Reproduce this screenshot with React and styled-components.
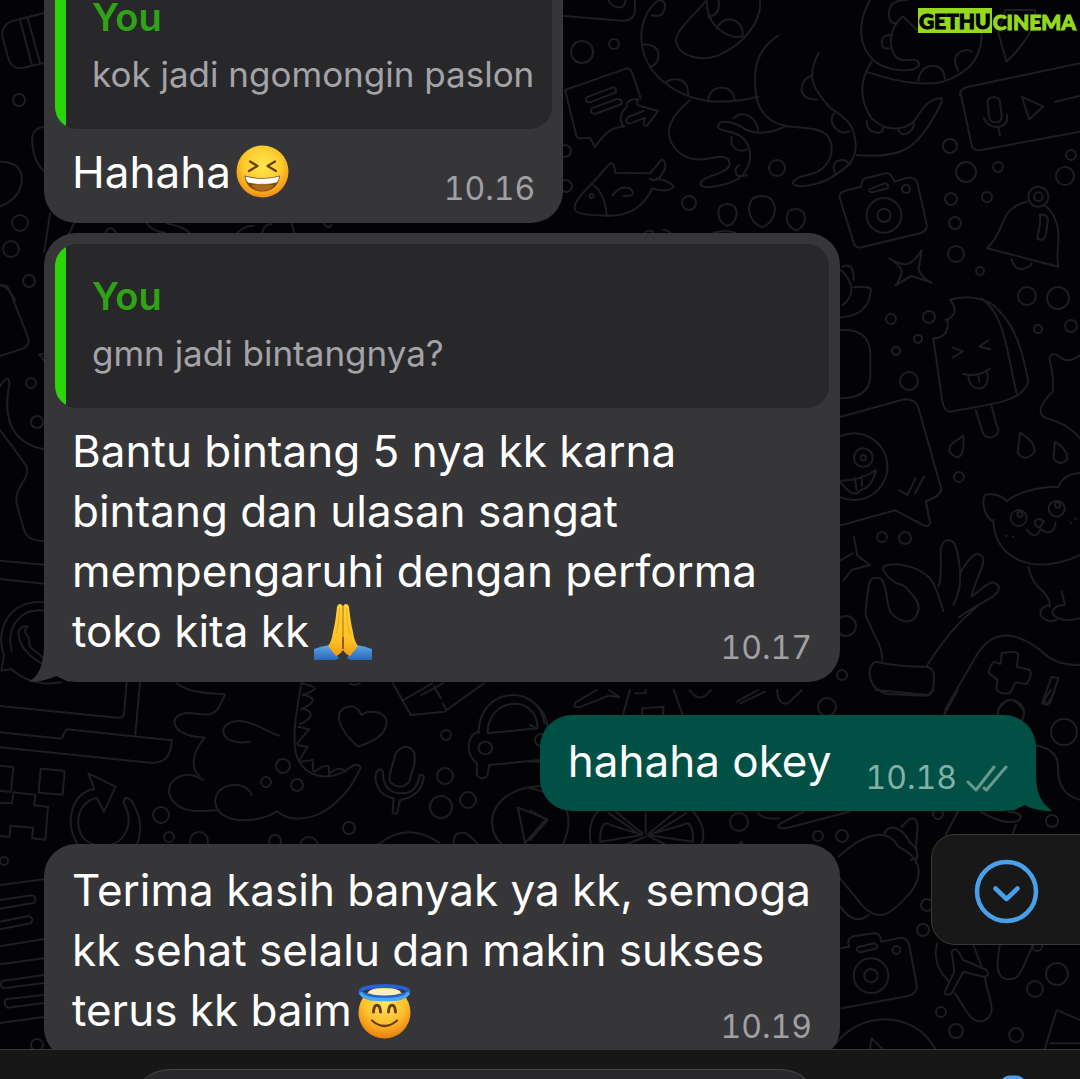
import { useState } from "react";
import styled, { createGlobalStyle } from "styled-components";

const GlobalStyle = createGlobalStyle`
  * {
    box-sizing: border-box;
  }
  body {
    margin: 0;
    background-color: #030305;
    font-family: Inter, "Liberation Sans", sans-serif;
    color: #fff;
  }
`;

const Screen = styled.div`
  position: relative;
  display: flex;
  flex-direction: column;
  height: 100vh;
  overflow: hidden;
`;

const WallpaperArt = styled.svg`
  position: absolute;
  top: 0;
  left: 0;
  width: 100%;
  height: 100%;
  fill: none;
  stroke: #1e1e20;
  stroke-linecap: round;
  stroke-linejoin: round;
`;

const Watermark = styled.div`
  position: absolute;
  top: 8px;
  right: 4px;
  display: flex;
  font-family: Lato, sans-serif;
  font-size: 21px;
  font-weight: 900;
  line-height: 26px;
  -webkit-text-stroke: 1px currentColor;
  color: #95d91e;
  z-index: 2;
`;

const WatermarkTag = styled.span`
  height: 25px;
  padding: 0 1px;
  margin-right: 1px;
  background-color: #95d91e;
  color: #000;
`;

const WatermarkTail = styled.span`
  padding-top: 1px;
`;

const Thread = styled.main`
  position: relative;
  flex: 1;
  min-height: 0;
  display: flex;
  flex-direction: column;
  align-items: flex-start;
  padding: 0 44px;
  margin-top: -46px;
`;

const Bubble = styled.article`
  position: relative;
  flex: none;
  max-width: 796px;
  margin-top: ${({ $gap }) => $gap || 0}px;
  align-self: ${({ $mine }) => ($mine ? "flex-end" : "flex-start")};
  background-color: ${({ $mine }) => ($mine ? "#005045" : "#363638")};
  border-radius: 32px;
`;

const Quote = styled.blockquote`
  display: flex;
  margin: 11px 11px 0;
  height: 164px;
  background-color: #28282a;
  border-radius: 22px;
  overflow: hidden;
  &::before {
    content: "";
    flex: none;
    width: 11px;
    background-color: #2cd40a;
  }
`;

const QuoteBody = styled.div`
  padding: 24px 18px 0 26px;
`;

const QuoteAuthor = styled.cite`
  display: block;
  font-size: 38px;
  font-style: normal;
  font-weight: 600;
  line-height: 57px;
  color: #2fa315;
`;

const QuoteText = styled.p`
  margin: 0;
  font-size: 35px;
  line-height: 57px;
  color: #a3a3a8;
`;

const Message = styled.p`
  margin: 0;
  padding: ${({ $quoted }) => ($quoted ? "13px 28px 21px" : "16px 28px 20px")};
  font-size: 44px;
  line-height: 60px;
  &::after {
    content: "";
    display: block;
    clear: both;
  }
`;

const Meta = styled.span`
  float: right;
  display: flex;
  align-items: center;
  gap: 9px;
  height: 40px;
  margin: 27px 0 -7px 34px;
  font-size: 32px;
  font-variant-numeric: tabular-nums;
  color: ${({ $mine }) => ($mine ? "#84b0a9" : "#a0a0a5")};
`;

const Emoji = styled.svg`
  width: ${({ $size }) => $size}px;
  height: ${({ $size }) => $size}px;
  margin: -4px 0 -4px 5px;
  vertical-align: ${({ $drop }) => -$drop}px;
`;

const Tail = styled.svg`
  position: absolute;
  bottom: 0;
  ${({ $mine }) => ($mine ? "right: -16px;" : "left: -15px;")}
  width: 40px;
  height: 40px;
  fill: ${({ $mine }) => ($mine ? "#005045" : "#363638")};
`;

const ScrollButton = styled.button`
  position: absolute;
  right: -1px;
  bottom: 134px;
  display: flex;
  align-items: center;
  width: 150px;
  height: 111px;
  padding: 3px 0 0 42px;
  background-color: #181819;
  border: 1px solid #39393b;
  border-radius: 24px 0 0 24px;
  cursor: pointer;
  z-index: 2;
`;

const Composer = styled.form`
  position: relative;
  flex: none;
  display: flex;
  align-items: flex-start;
  justify-content: space-between;
  height: 30px;
  padding: 19px 39px 0 130px;
  background-color: #171718;
  border-top: 1px solid #39393b;
  overflow: hidden;
  z-index: 1;
`;

const ComposerInput = styled.input`
  width: 690px;
  height: 80px;
  padding: 0 32px;
  background-color: #28282a;
  border: 1px solid #48484a;
  border-radius: 40px;
  font-size: 44px;
  color: #fff;
  outline: none;
`;

const CameraButton = styled.button`
  width: 56px;
  height: 62px;
  padding: 0;
  background: none;
  border: 0;
  cursor: pointer;
`;

const Laughing = () => (
  <Emoji $size={53} $drop={6} viewBox="0 0 53 53" role="img" aria-label="laughing">
    <defs>
      <radialGradient id="laugh-face" cx="50%" cy="38%" r="62%">
        <stop offset="0" stopColor="#ffe850" />
        <stop offset="0.6" stopColor="#fdc92b" />
        <stop offset="1" stopColor="#ee8f12" />
      </radialGradient>
    </defs>
    <circle cx="26.5" cy="26.5" r="26" fill="url(#laugh-face)" />
    <g fill="none" stroke="#6b3d0c" strokeWidth="2.2" strokeLinecap="round" strokeLinejoin="round">
      <path d="M14 16.500l7.500 4.500-8.500 5" />
      <path d="M39 16.500l-7.500 4.500 8.500 5" />
    </g>
    <path d="M8.500 30.500q18 5 35.500 0c-.5 9-7.500 16-17.700 16S9 39.500 8.500 30.500z" fill="#7c4a10" />
    <path d="M9.500 31.500q17 4.500 33.500 0c0 3-1 4.500-2.500 6q-14 3-28.500 0c-1.500-1.500-2.300-3-2.500-6z" fill="#fff" />
    <path d="M15 40.500q11.500-3.500 23 0c-6 7-17 7-23 0z" fill="#a96a1c" />
  </Emoji>
);

const FoldedHands = () => (
  <Emoji $size={58} $drop={10} viewBox="0 0 58 58" role="img" aria-label="folded hands">
    <defs>
      <linearGradient id="hand" x1="0" x2="0" y1="0" y2="1">
        <stop offset="0" stopColor="#ffd43a" />
        <stop offset="0.7" stopColor="#fdc024" />
        <stop offset="1" stopColor="#ee9c14" />
      </linearGradient>
      <linearGradient id="sleeve" x1="0" x2="0" y1="0" y2="1">
        <stop offset="0" stopColor="#5ea7ea" />
        <stop offset="1" stopColor="#2c68b4" />
      </linearGradient>
    </defs>
    <path d="M0 46q8-3 16-4l9 13q-2 2-5 2H0z" fill="url(#sleeve)" />
    <path d="M58 46q-8-3-16-4l-9 13q2 2 5 2h20z" fill="url(#sleeve)" />
    <path d="M29 4c-1-4-5-4-6 0-1 9-2 17-4 25-1 6-2 10-5 14l8 10c3-1 5-3 7-6z" fill="url(#hand)" />
    <path d="M29 4c1-4 5-4 6 0 1 9 2 17 4 25 1 6 2 10 5 14l-8 10c-3-1-5-3-7-6z" fill="url(#hand)" />
    <path d="M25.500 5q-.5 16-3.500 26M32.500 5q.5 16 3.500 26" fill="none" stroke="#f0a91c" strokeWidth="1" />
    <path d="M29 4v40" stroke="#c47a0c" strokeWidth="1.200" />
    <path d="M29 34v12" stroke="#7c4a10" strokeWidth="1.600" />
  </Emoji>
);

const Halo = () => (
  <Emoji $size={55} $drop={9} viewBox="0 0 55 55" role="img" aria-label="smiling with halo">
    <defs>
      <radialGradient id="halo-face" cx="50%" cy="30%" r="68%">
        <stop offset="0" stopColor="#ffe66a" />
        <stop offset="0.6" stopColor="#fdbf2c" />
        <stop offset="1" stopColor="#ea830e" />
      </radialGradient>
    </defs>
    <circle cx="27.500" cy="28.500" r="26" fill="url(#halo-face)" />
    <ellipse cx="27.500" cy="7.500" rx="24" ry="5.500" fill="none" stroke="#2563cf" strokeWidth="4" />
    <path d="M3.500 8.500c2 6.500 14 7 24 7s22-.5 24-7" fill="none" stroke="#4ea6ee" strokeWidth="3.500" />
    <ellipse cx="27.500" cy="8" rx="16" ry="3.500" fill="#fdf0b8" />
    <g fill="none" stroke="#6b3d0c" strokeLinecap="round">
      <path d="M16.500 28c.5-9 6.500-9 7 0M31.500 28c.5-9 6.500-9 7 0" strokeWidth="3" />
      <path d="M15 36.500q12.500 11 25 0" strokeWidth="2.200" />
    </g>
  </Emoji>
);

const Ticks = () => (
  <svg width="42" height="28" viewBox="0 0 42 28" fill="none" stroke="#68978f" strokeWidth="3" strokeLinecap="round" strokeLinejoin="round" aria-label="delivered">
    <path d="M2 18l8 8L28 3M18 24l2.500 2L40 3" />
  </svg>
);

const circles = [
  [19, 100, 6], [20, 223, 8], [11, 249, 8], [29, 281, 6], [31, 383, 5], [37, 422, 6], [582, 52, 11], [614, 44, 5],
  [777, 168, 8], [689, 203, 7], [950, 146, 7], [966, 172, 10], [998, 167, 5], [1071, 155, 5], [1065, 176, 9],
  [951, 199, 6], [987, 197, 5], [955, 223, 6], [956, 254, 8], [980, 271, 4], [565, 151, 6], [566, 186, 6],
  [891, 319, 5], [929, 317, 6], [918, 339, 4], [896, 351, 4], [909, 381, 9], [1027, 296, 9], [1058, 298, 11],
  [1038, 329, 4], [1071, 326, 6], [959, 477, 5], [882, 537, 5], [905, 538, 6], [846, 626, 10], [842, 675, 5],
  [283, 766, 7], [266, 782, 5], [297, 785, 6], [161, 815, 8], [169, 837, 5], [199, 841, 9],
  [349, 828, 6], [275, 841, 6], [309, 846, 9], [446, 735, 5], [445, 776, 8], [441, 807, 11], [468, 800, 8],
  [739, 822, 9], [818, 836, 5], [842, 836, 6], [827, 707, 9], [1011, 713, 13], [1064, 732, 13], [1052, 821, 6],
  [938, 814, 5], [927, 905, 6], [923, 930, 6], [941, 1012, 5], [956, 1031, 7], [1016, 1035, 7], [1035, 989, 8],
  [1057, 974, 11], [1037, 946, 5], [4, 861, 4], [37, 1045, 6], [541, 740, 6],
];

const Wallpaper = () => (
  <WallpaperArt viewBox="0 0 1080 1079" preserveAspectRatio="xMidYMid slice" aria-hidden="true">
    <g strokeWidth="2">
      {circles.map(([x, y, r], i) => (
        <circle key={i} cx={x} cy={y} r={r} />
      ))}
    </g>
    {/* jar, pebble, top left */}
    <g transform="scale(.33333)" strokeWidth="6">
      <path d="M135 38L40 62Q0 75 8 115L25 175Q35 210 70 203L135 188M60 60L95 192M82 52L120 188" />
      <path d="M135 380q-45 5-38 50 5 60 38 85M0 485q70 0 65 60-5 50-65 75M150 640L133 755M225 665l-30 60M0 855q25 5 45 45" />
      <path d="M315 700q15-30 35 0M440 670q20 25 55 28M500 670q50 10 70 30M710 700q25-25 50-22M785 700q10-30 30-28M875 672l8 28M970 670q15 20 25 5" />
    </g>
    {/* octopus, fish, note, camera, bell */}
    <g transform="translate(560 0) scale(.33333)" strokeWidth="6">
      <path d="M10 48l180 14q35 0 35-35V0M145 0q10 20 30 22t22-22" />
      <path d="M295 0C220 60 230 180 310 245s170 72 285 45M440 0c-30 40-90 85-92 120 5 50 80 70 140 40S605 70 600 0" />
      <path d="M275 45q30 10 38-15T300 0M248 133q45 0 47 30t-25 38M315 248q20-15 45-8t25 48M443 305q5-40 40-42t42 38M440 0q0 60 40 90t68 18M470 85q20-35 50-25t28 48M445 52q40-10 30-52" />
      <path d="M655 107c-80 50-75 130-65 190 15 55 55 75 90 82 60 5 95 5 120 25 30 40 10 90-25 110-35 15-70 15-77 35 10 18 65 8 105-10 60-35 90-60 83-115-5-60-40-75-75-100-50-55-75-90-35-165" />
      <path d="M755 227q-30 10-30 40t45 32M822 340q-15 20 2 42t45 12M825 520q-12-30 10-38t34 12" />
      <path d="M390 300c-60 50-75 90-55 130 40 70 110 45 145 40 35 0 35 30 15 40-30 20-70 20-74 42 5 20 90 5 125-25 35-40 30-90 0-115-30-25-75-15-72-35 10-25 60-5 80 10 40 20 90 10 125-10" />
      <path d="M520 355q20-20 45-8t30 45M515 410q-5 30 15 38t30 0M560 525q-25 10-32-5t10-25" />
      <path d="M930 0c-40 70-35 140 15 185 40 30 120 35 132 10 0-30-40-5-65-20-30-30-25-90 15-125M1040 0q-50 0-53 35t20 35M990 105q-25 0-25 22t22 18M1030 50l40 40" />
      <path d="M935 185c-40 60-35 120 0 170 40 40 100 40 130 5 30-50 50-65 80-65 5 10-10 30-20 50-60 110-110 130-235 120M918 215q150 50 230 30 130-40 115-165M920 362q0 30 25 35t25-15M1012 385q10 25 30 15t20-35M1075 242q5-40 40-44t40 38M1195 212q-20-35 0-52t40-5" />
      <path d="M1340 185l-25-85 20-70h90q10 60-85 155zM1200 285q0-20 25-25l335-70M1203 285l32 150q5 20 30 15l295-55" />
      <path d="M1283 310q-2-18 17-18t20 15l5 40q0 20-17 20t-20-15zM1272 355q15 30 45 25t24-35M1315 382l5 25M1385 290l65 30-42 38zM1485 305l75-17" />
      <path d="M15 270l185-65q12 0 17 15l25 75M15 270l35 140q5 8 40 3l15 28 30-38q20-20 60-25" />
      <path d="M80 292l78-30q12 0 10 15l-78 30q-18 0-10-15zM95 325l75-28q18 0 15 15l-80 30q-18-2-10-17zM190 380q-20-30 10-60 0-25 35-22-10 18 5 20l55 15-35 45q-15 0-5-25l-45 18q-20-5-5-20l45-18" />
      <path d="M45 630c-5-15 5-35 50-78q40 25 45 95-90-2-95-17zM95 552l55-62q15-2 15 28l105 2 35-42q15 5 10 30l-20 30q-15 5-25-2M290 535q40 10 52 25-20 20-65 5-40 85-135 82" />
      <circle cx="95" cy="588" r="6" />
      <path d="M157 587q25-35 55-20 20 25-22 20" />
      <path d="M475 640q0-28 27-28t28 28q-2 30-27 38-27-10-28-38zM567 630q0-42 38-42t40 42q-5 40-38 52-35-12-40-52zM680 655q0-28 27-28t28 28q-2 25-25 37-27-10-30-37zM255 696q12-8 25 0M310 690q12 0 20 8M460 698q35-10 65 0" />
      <path d="M838 590q0-15 25-20l40-10q0-25 25-28l50-12q15-3 25 25l40-12q25-3 30 20l27 120q3 20-20 27l-175 42q-20 3-25-17zM928 568l45-18q15 2 10 15l-45 12q-14 0-10-9z" />
      <circle cx="972" cy="646" r="52" />
      <circle cx="972" cy="646" r="20" />
      <circle cx="1038" cy="567" r="12" />
      <path d="M1410 603c-100 20-65 80-128 142l213 55c-10-50 10-80-5-130q-15-45-40-55M1355 778q10 35 35 28t25-16M1440 645q20-5 24 15l-7 48q-8 18-25 8l8-45z" />
      <circle cx="1435" cy="590" r="30" />
      <circle cx="1435" cy="590" r="13" />
      <path d="M988 775q40 25 60 15 20-10 37-40-5 40-10 55 10 30 40 43-35-12-60-20-20 10-48 28 20-30 18-45-10-20-37-36zM848 800q35-15 33 40" />
    </g>
    {/* ice cream, sticker, cat, hand, gamepad */}
    <g transform="translate(800 270) scale(.33333)" strokeWidth="6">
      <path d="M123 0q60 60 5 105M160 52q40-5 53 5-5 80-90 85M123 180q85-5 88 70v70q-5 65-88 65" />
      <path d="M450 90c40-15 115-10 145 30 60 60 75 140 90 215-20 70-150 70-235 90-15 0-20-15-23-30l-27-190q35 0 42-30 5-25-5-25c30-10 35-35 13-60zM545 85c70 50 75 160 105 285M527 420l22 70q15 20 35 8t5-35l-14-55" />
      <path d="M457 232l32 12-30 18M565 210l-27 20 33 8M490 312q50 10 80-17M505 318q5 45 45 35 20-20 10-50M535 315l3 20" />
      <path d="M123 440l190-52q35 0 42 25l68 240q3 25-45 40 5 35 13 65-5 15-20 8l-85-45-163 45" />
      <path d="M123 498a100 100 0 1 1 0 184" />
      <circle cx="190" cy="563" r="28" />
      <circle cx="190" cy="563" r="8" />
      <path d="M123 632q60 0 105-32-10 50-45 60-10 15-30 8-20-15-30-30M165 625l5 35M185 618v30M297 660l25 15 25-50M345 670l27-50" />
      <path d="M490 497q5 65-20 65-35-15-15-40zM660 488q50 30 43 60-30 30-50 0zM765 515q45 30 35 55-20 20-40-5z" />
      <path d="M840 255q-30 25-55 10-30-25-37 0 15 60 10 100-60 60-20 80 65 15 102 60" />
      <path d="M575 752c-25-20-30-60-20-78 30-5 50 0 65 20 30-25 90-45 155-43q15-40 65-42M580 750c0 120 130 170 260 105" />
      <circle cx="656" cy="744" r="24" />
      <circle cx="770" cy="716" r="24" />
      <circle cx="660" cy="733" r="8" />
      <circle cx="773" cy="705" r="8" />
      <path d="M705 752q12-10 27 2-10 15-15 20-15-10-12-22zM680 778q25 35 42 0 40 25 45-22M618 798h1M638 800h1M812 758h1M826 747h1M685 890q10 50 45 75 25 30 18 45M748 1005q-30 5-26 30 15 25 48 15M785 965l10 40q-35 0-38 25 20 30 83 15" />
      <path d="M162 802l10 55 38 28-55 15-25 32M123 870l35-20" />
      <path d="M247 1172q0-35-20-70l-30-65q0-30 10-95c5-25 40-25 45 0 10 30 10 70 20 85 20 25 50 35 70 20 20-25 15-45 5-60-25-30-35-45-50-45-20-5-55-40-47-52 30-15 100-5 140 35 20 25 30 65 40 98M415 950q10-20 7-110c5-40 40-40 48 0 15 60 15 120-10 165M480 910c35-60 55-70 70-45 5 25-25 60-35 115M515 980c40-30 60-60 82-30 0 35-60 45-120 92M530 1010c-60 50-105 105-148 175M225 1175q70 15 155 15 25 5 22 40-2 50-25 47l-115-5c-60-15-65-80-37-97z" />
      <path d="M435 1320l95-165c50-80 120-70 190-15 40 40 80 45 120 45M605 1150q50-10 50 5l-5 35 40 10q8 20-12 42l-32-5-15 30q-25 10-42-8l3-30-25-18q0-25 15-35l20 5zM755 1220l20 5-25 75-22-5zM595 1320q35-60 75 0" />
    </g>
    {/* left edge shapes */}
    <g transform="translate(0 200) scale(.33333)" strokeWidth="6">
      <path d="M0 255q25-3 30 20l55 140q5 20-15 30L0 468M118 465l14-5M118 462l14 20M0 690q50 65 80 110c10 50-50 60-25 130 20 60 10 90 75 93M0 560c20-40 35-25 25 10-15 100 20 160 107 178M0 1082l132 12M0 1137l132 14" />
      <path d="M132 1207c-100-10-150 80-120 160l-8 45 30-5q60 55 150 40M132 1232c-70-10-115 50-97 120M85 1310q-20-20 0-30-20-5-30 15 0 55 70 95M85 1310l5 30 42 35" />
    </g>
    {/* laptop, creeper, refresh, dinosaur, heart */}
    <g transform="translate(0 560) scale(.33333)" strokeWidth="6">
      <path d="M380 368l-8 95q-2 12-20 10L0 438M420 368l-14 155M0 517l170 18q20 3 20-12l10-15 315 33c0 50-25 70-65 67L0 562" />
      <path d="M0 617l40 4-7 75-33-4M122 626l72 6-6 72-72-6zM0 728l36 2 5-33 66 8-5 30 42 6-8 98-40-4 4-32-68-6-4 34-28-3" />
      <path d="M265 640l82 40-35 75-22-42c-65 15-70 100-30 130 60 35 115 5 125-50 5-30-5-50-15-65q5-25 25-5c30 50 35 90 10 145M265 640l18 48c-60 5-95 90-50 165" />
      <path d="M530 370c30 25 80 30 145 33-10 20-15 50-45 60-35 5-70-15-97 5-25 20-5 60 82 65-45 50-40 100-15 115M610 660c-70-45-130 20-90 65 30 35 80 30 135 25M750 545c-90 15-100-50-50-60 45-10 90 25 137 42M755 705c-20-50-110-35-110 20 10 80 150 60 185 28 50 45 130 15 165-15 55-45 70-80 87-115-5-10-15-10-25-5-70 55-150 35-170-40-10-50 0-120 18-210" />
      <path d="M905 370q40 10 40 15t-36 22M908 403q35 10 30 20t-33 25M905 445q35 10 25 25t-30 22M895 500l32 8-35 42M893 555l30 5-23 38M900 605l38-5 2 35M945 635q30-25 42-15v25M990 640q30-25 45-5M1075 560c-60-50-80-110-30-120 25-5 30 10 40 25 20-15 75-15 75 25-5 40-45 55-85 70zM1050 372l15 3 15-5" />
    </g>
    {/* microphone, car, play, pencil */}
    <g transform="translate(0 680) scale(.35714 .33333)" strokeWidth="6">
      <path d="M1108 220q30-40 53 0v30l-15 55q-25 30-55 0v-20zM1055 275q10-15 17 0 0 65 55 65 40 0 48-55 15-5 10 15-10 50-65 60l-8 40q-15 5-12-10l2-35c-50-10-55-60-47-80z" />
      <path d="M1365 160c0-110 140-120 140-15zM1340 160c0-140 165-155 185-30M1340 155c-30 5-40 65-5 95v35q15 20 30 0l5-30 140-15" />
      <circle cx="1359" cy="204" r="19" />
      <path d="M1450 382l80 35-60 72zM1515 318c-130 5-170 110-110 175M1060 493q80-70 170-5M1270 490q0-40 35-30 20 15 35 35M1100 10l50 95 95-10 110-85M1130 60l80-50M1215 20l20 35M1240 70l10 20M1180 45l60-35" />
    </g>
    {/* shapes around the outgoing bubble */}
    <g transform="translate(530 690) scale(.35075 .33333)" strokeWidth="6">
      <path d="M225 0l30 22-30-5-85 35q-20 0-10-15l60-37M285 0l-20 75M330 0v10h-30M410 0l25 75M320 75v-20l60-5v25M455 0q30 45 60 0M590 35l60-35M600 40l70-35M705 0q0 45 30 40 40-40 40-40M985 0l150 15 15-15M1220 0l-40 75M1485 0l-25 40 15 5 20-40M0 30q45 30 50 80M0 105l20 10" />
      <path d="M1440 165q70 15 65 70 0 80 65 95M0 215h32M0 295q150 30 95 165M0 360l50 30-50 60M173 460q-10-60 20-95M490 460q15-50-25-95M200 455q0-70 30-50l90 30zM465 455q0-70-30-50l-100 30zM245 365l75 65M225 370l90 65M415 365l-75 65M445 370l-100 65M330 370v60M330 440l-60 25M340 440l50 25M595 465l8-10 5 10" />
      <path d="M650 370q20 20 60 15M780 365l-65 35q-20 15 15 15l180-50M1220 365l-35 70M1285 365q70 45 110 25 15-20-30-25M1385 405l-10 30" />
      <path d="M880 500c70-70 140-90 170-30 60 30 75 75 40 130-70 90-100 90-140 50l-70-90M1010 430c15-30 50-20 75 30 25 20 20 40 15 60M1060 410q40-50 45 0l-5 70M885 650q40 60 80 25M1085 510l20-5" />
    </g>
    {/* bottom right */}
    <g transform="translate(800 820) scale(.33333)" strokeWidth="6">
      <path d="M123 385l25-5q-10-25 15-32l60-8q20 0 20 25l60-12q20 0 25 25l22 115q5 25-25 35l-200 37M172 382l50-12q15 5 8 15l-48 12q-15-3-10-15z" />
      <circle cx="213" cy="467" r="52" />
      <circle cx="213" cy="467" r="20" />
      <circle cx="289" cy="390" r="12" />
      <path d="M105 675c70-100 230-110 300 10M210 685l5-30 30 30M412 370c-15 50 10 90 35 115M455 395q10-15 20 0l15 25 70 30q10 20-10 20l-60-15-35 65q-20 10-20-5l28-60zM520 375l25 65M465 520c35 50 45 90 85 83 50-20 10-80 5-130M600 375c-15 70-10 115 45 100 25-15 30-60 55-97M735 685l35-115 70 30M750 670h90" />
    </g>
    {/* bottom left lines */}
    <g transform="translate(0 820) scale(.33333)" strokeWidth="6">
      <path d="M0 195l132-17M0 240l95-14q18 5 8 22L0 266M0 305l85-17q18 5 8 22L0 328M0 379l132-22M0 433l132-18M132 465L5 483q-5 20 5 22l122-16M132 525l-115 13q-8 15 5 25l110-14M0 609l132-18" />
    </g>
  </WallpaperArt>
);

const Reply = ({ author, children }) => (
  <Quote>
    <QuoteBody>
      <QuoteAuthor>{author}</QuoteAuthor>
      <QuoteText>{children}</QuoteText>
    </QuoteBody>
  </Quote>
);

export default function App() {
  const [draft, setDraft] = useState("");
  return (
    <Screen>
      <GlobalStyle />
      <Wallpaper />
      <Watermark>
        <WatermarkTag>GETHU</WatermarkTag>
        <WatermarkTail>CINEMA</WatermarkTail>
      </Watermark>
      <Thread>
        <Bubble>
          <Reply author="You">kok jadi ngomongin paslon</Reply>
          <Message $quoted>
            Hahaha
            <Laughing />
            <Meta>10.16</Meta>
          </Message>
        </Bubble>
        <Bubble $gap={10}>
          <Reply author="You">gmn jadi bintangnya?</Reply>
          <Message $quoted>
            Bantu bintang 5 nya kk karna bintang dan ulasan sangat mempengaruhi dengan performa toko kita kk
            <FoldedHands />
            <Meta>10.17</Meta>
          </Message>
          <Tail viewBox="0 0 40 40">
            <path d="M15 0c0 20-3 32-15 40 10 0 20-3 28-6l12 6V0z" />
          </Tail>
        </Bubble>
        <Bubble $mine $gap={33}>
          <Message>
            hahaha okey
            <Meta $mine>
              10.18
              <Ticks />
            </Meta>
          </Message>
          <Tail $mine viewBox="0 0 40 40">
            <path d="M24 0c0 22 4 30 16 40-10 0-20-2-27-6L0 40V0z" />
          </Tail>
        </Bubble>
        <Bubble $gap={33}>
          <Message>
            Terima kasih banyak ya kk, semoga kk sehat selalu dan makin sukses terus kk baim
            <Halo />
            <Meta>10.19</Meta>
          </Message>
        </Bubble>
      </Thread>
      <ScrollButton type="button" aria-label="Scroll to latest">
        <svg width="65" height="65" viewBox="0 0 65 65" fill="none" stroke="#4a9fe9" strokeWidth="4.500" strokeLinecap="round" strokeLinejoin="round">
          <circle cx="32.500" cy="32.500" r="29.500" />
          <path d="M21.500 29.500l11 10.500 11-10.500" />
        </svg>
      </ScrollButton>
      <Composer onSubmit={(e) => e.preventDefault()}>
        <ComposerInput aria-label="Message" value={draft} onChange={(e) => setDraft(e.target.value)} />
        <CameraButton type="button" aria-label="Camera">
          <svg width="56" height="48" viewBox="0 0 56 48" fill="none" stroke="#4a9fe9" strokeWidth="5" strokeLinejoin="round">
            <path d="M19 6q2-3 6-3h6q4 0 6 3l3 4h11v34H5V10h11z" />
            <circle cx="28" cy="26" r="10" />
          </svg>
        </CameraButton>
      </Composer>
    </Screen>
  );
}
